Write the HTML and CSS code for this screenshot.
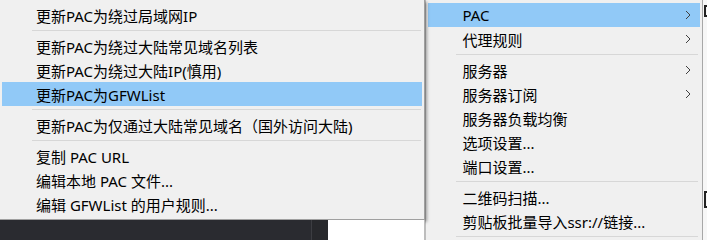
FILE: index.html
```html
<!DOCTYPE html>
<html lang="zh-CN">
  <head>
    <meta charset="UTF-8" />
    <meta name="viewport" content="width=device-width, initial-scale=1.0" />
    <title>PAC 菜单</title>
    <link rel="stylesheet" href="styles.css">
  </head>
  <body>
    <div class="screen">
      <!-- PAC submenu + what shows below it -->
      <div class="left-col">
        <ul class="menu menu-pac">
          <li class="item">更新PAC为绕过局域网IP</li>
          <li class="sep"></li>
          <li class="item">更新PAC为绕过大陆常见域名列表</li>
          <li class="item">更新PAC为绕过大陆IP(慎用)</li>
          <li class="item active">更新PAC为GFWList</li>
          <li class="sep"></li>
          <li class="item">更新PAC为仅通过大陆常见域名（国外访问大陆)</li>
          <li class="sep"></li>
          <li class="item">复制 PAC URL</li>
          <li class="item">编辑本地 PAC 文件...</li>
          <li class="item">编辑 GFWList 的用户规则...</li>
        </ul>
        <div class="under">
          <div class="editor"><div class="gutter"></div></div>
          <div class="blank"></div>
        </div>
      </div>

      <!-- main tray menu -->
      <ul class="menu menu-main">
        <li class="item active">PAC<span class="arrow"><svg width="6" height="10" viewBox="0 0 6 10"><path d="M1 1 L5 5 L1 9" /></svg></span></li>
        <li class="item">代理规则<span class="arrow"><svg width="6" height="10" viewBox="0 0 6 10"><path d="M1 1 L5 5 L1 9" /></svg></span></li>
        <li class="sep"></li>
        <li class="item">服务器<span class="arrow"><svg width="6" height="10" viewBox="0 0 6 10"><path d="M1 1 L5 5 L1 9" /></svg></span></li>
        <li class="item">服务器订阅<span class="arrow"><svg width="6" height="10" viewBox="0 0 6 10"><path d="M1 1 L5 5 L1 9" /></svg></span></li>
        <li class="item">服务器负载均衡</li>
        <li class="item">选项设置...</li>
        <li class="item">端口设置...</li>
        <li class="sep"></li>
        <li class="item">二维码扫描...</li>
        <li class="item">剪贴板批量导入ssr://链接...</li>
        <li class="sep"></li>
      </ul>

      <div class="edge">
        <span class="mark mark-top"></span>
        <span class="mark mark-bottom"></span>
      </div>
    </div>
  </body>
</html>
```

FILE: styles.css
```css
/* Reset & Base Styles */
* {
  margin: 0;
  padding: 0;
  box-sizing: border-box;
}

body {
  background-color: #fff;
  color: #000;
  font-family: "Noto Sans", "Noto Sans CJK SC", sans-serif;
  font-size: 15px;
  overflow: hidden;
}

.screen {
  display: flex;
  width: 707px;
  height: 240px;
  overflow: hidden;
}

/* Left column: submenu on top, desktop below */
.left-col {
  display: flex;
  flex-direction: column;
  width: 426px;
  position: relative;
  z-index: 1;
}

.under {
  flex: 1;
  display: flex;
}

.editor {
  width: 328px;
  background-color: #2a2b30;
  display: flex;
  justify-content: flex-end;
}

.gutter {
  width: 17px;
  border-left: 1px solid #3c3d42;
  background-color: #27282c;
}

.blank {
  flex: 1;
  background-color: #fff;
  border-right: 1px solid #bdbdbd;
}

/* Menu styles */
.menu {
  list-style: none;
  background-color: #f0f0f0;
  padding: 3px 2px;
}

.menu-pac {
  height: 220px;
  border-right: 1px solid #a0a0a0;
  border-bottom: 1px solid #a0a0a0;
  box-shadow: 2px 2px 3px rgba(0, 0, 0, 0.35);
}

.menu-main {
  width: 278px;
  border-left: 1px solid #bdbdbd;
  border-right: 1px solid #a8a8a8;
}

.item {
  display: flex;
  align-items: center;
  height: 24px;
  padding-left: 34px;
  white-space: nowrap;
}

.item.active {
  background-color: #91c9f7;
}

.arrow {
  margin-left: auto;
  margin-right: 9px;
  display: flex;
}

.arrow path {
  fill: none;
  stroke: #404040;
  stroke-width: 1;
}

.sep {
  height: 1px;
  margin: 3px 1px 3px 30px;
  background-color: #d7d7d7;
}

.menu-main .sep {
  margin-left: 28px;
  margin-right: 2px;
}

/* Right strip behind the menus */
.edge {
  flex: 1;
  background-color: #f7f7f7;
  display: flex;
  flex-direction: column;
  justify-content: space-between;
  padding: 5px 0 32px 1px;
}

.mark {
  display: block;
  width: 3px;
  height: 12px;
  border-top: 2px solid #222;
  border-bottom: 2px solid #222;
  border-left: 2px solid #222;
}

.mark-bottom {
  height: 17px;
}
```
